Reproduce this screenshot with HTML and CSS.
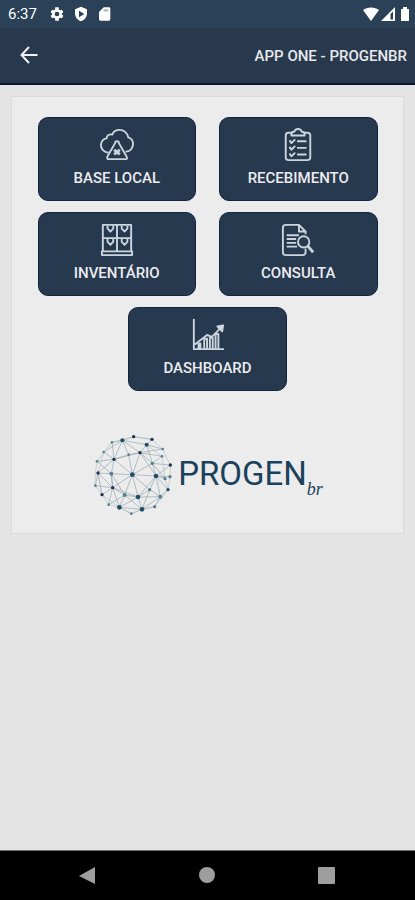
FILE: index.html
```html
<!DOCTYPE html>
<html lang="pt-BR">
<head>
<meta charset="utf-8">
<meta name="viewport" content="width=device-width, initial-scale=1">
<title>App One - ProgenBR</title>
<link rel="stylesheet" href="styles.css">
</head>
<body>
<div class="status">
  <div class="status-group">
    <span class="clock">6:37</span>
    <svg width="16" height="16" viewBox="0 0 24 24" fill="#fff" aria-hidden="true"><path fill-rule="evenodd" d="M19.4 13a7 7 0 0 0 0-2l2.2-1.700-2.200-3.800-2.600 1a8 8 0 0 0-1.800-1L14.600 2h-5.200L9 5.500a8 8 0 0 0-1.800 1l-2.600-1-2.200 3.800L4.600 11a7 7 0 0 0 0 2l-2.200 1.700 2.200 3.800 2.600-1a8 8 0 0 0 1.800 1l.4 3.500h5.200l.4-3.500a8 8 0 0 0 1.800-1l2.600 1 2.200-3.800zM12 15.500a3.500 3.500 0 1 1 0-7 3.500 3.500 0 0 1 0 7z"/></svg>
    <svg width="16" height="16" viewBox="0 0 24 24" fill="#fff" aria-hidden="true"><path fill-rule="evenodd" d="M12 1 3 5v6c0 6 4 10.500 9 12 5-1.500 9-6 9-12V5zM9 7l8 5-8 5z"/></svg>
    <svg width="16" height="16" viewBox="0 0 24 24" fill="#fff" aria-hidden="true"><path d="M18 2h-8L3 9v11c0 1 1 2 2 2h13c1 0 2-1 2-2V4c0-1-1-2-2-2z"/><path fill="#a3afba" d="M10 5h7v3h-7z"/></svg>
  </div>
  <div class="status-group status-end">
    <svg width="16" height="16" viewBox="0 0 16 16" fill="#fff" aria-hidden="true"><path d="M0 4C4 .5 12 .5 16 4L8 15z"/></svg>
    <svg width="14" height="16" viewBox="0 0 14 16" fill="#fff" aria-hidden="true"><path fill-rule="evenodd" d="M0 15 14 1v14zM9.500 8v5.500h2.500V5.500z"/></svg>
    <svg width="14" height="16" viewBox="0 0 14 16" fill="#fff" aria-hidden="true"><path d="M6 1h4v2h2v12H4V3h2z"/></svg>
  </div>
</div>
<header class="appbar">
  <button class="back" type="button" aria-label="Voltar">
    <svg width="18" height="18" viewBox="0 0 18 18" fill="none" stroke="#f2eef4" stroke-width="2" aria-hidden="true"><path d="M17.500 9H2M9 1 1.500 9 9 17"/></svg>
  </button>
  <h1 class="title">APP ONE - PROGENBR</h1>
</header>
<main class="content">
  <section class="panel">
    <nav class="menu">
      <button class="tile" type="button">
        <svg class="icon" viewBox="0 0 36 36" aria-hidden="true"><path d="M9 26H8C4 25 1 22 1 18c0-4 3-7 6-7 0-3 3-5 6-4 1-3 4-5 8-5 4 0 8 3 9 8 3 1 5 4 5 7 0 4-3 8-7 8h-1"/><path d="M18 14c-1 0-2 1-2 2L8 30c-1 2 0 3 1 3h18c2 0 2-1 1-3l-8-14c0-1-1-2-2-2z"/><path d="m15 23 6 5m0-5-6 5" stroke-width="3"/></svg>
        <span>BASE LOCAL</span>
      </button>
      <button class="tile" type="button">
        <svg class="icon" viewBox="0 0 36 36" aria-hidden="true"><path d="M12 5H8C6 5 5 6 5 8v23c0 2 1 3 3 3h20c2 0 3-1 3-3V8c0-2-1-3-3-3h-4"/><path d="M11 8V6c0-2 2-2 3-2 1-4 7-4 8 0 1 0 3 0 3 2v2zM17 14h10M17 21h10M17 28h10M9 13l2 3 4-4M9 20l2 3 4-4M9 27l2 3 4-4"/></svg>
        <span>RECEBIMENTO</span>
      </button>
      <button class="tile" type="button">
        <svg class="icon" viewBox="0 0 36 36" aria-hidden="true"><path d="M3 29V2h30v27M18 2v27M3 16h30M2 30h32v4H2z"/><path d="M8 3v3l3 3 3-3V3M23 3v3l3 3 3-3V3M8 17v3l3 3 3-3v-3M23 17v3l3 3 3-3v-3"/></svg>
        <span>INVENTÁRIO</span>
      </button>
      <button class="tile" type="button">
        <svg class="icon" viewBox="0 0 36 36" aria-hidden="true"><path d="M26 12V9l-7-7H5C3 2 2 3 2 5v26c0 2 1 3 3 3h18c2 0 3-1 3-3v-4M19 2v7h7"/><circle cx="24" cy="20" r="6"/><path d="m28 24 6 7" stroke-width="3"/><path d="M6 13h13M6 17h10M6 21h10M6 25h11"/></svg>
        <span>CONSULTA</span>
      </button>
      <button class="tile" type="button">
        <svg class="icon" viewBox="0 0 36 36" aria-hidden="true"><path d="M3 1v32h32M4 28l13-10 5 2 9-9"/><path d="M8 33v-6h2v6M14 33V22h3v11M20 33V21h3v12M26 33V17h3v16"/><path d="m28 9 5 5 1-6z" fill="#dbe2e9"/></svg>
        <span>DASHBOARD</span>
      </button>
    </nav>
    <div class="brand">
      <svg class="globe" viewBox="30 20 246 246" fill="none" aria-hidden="true">
        <path stroke="#93a5ae" stroke-width="2" d="M151 145 222 149M151 145 174 79M151 145 96 99M151 145 88 142M151 145 92 184M151 145 128 206M151 145 168 212M151 145 203 190M151 145 211 111M151 145 140 85M121 42 174 79 96 99zM174 79 194 55 121 42 155 31 210 39 194 55 242 68 174 79 211 111 194 55M174 79 222 149 211 111 265 116 222 149 249 157 211 111 240 90 174 79M222 149 168 212 203 190 222 149 235 211 203 190 180 249 168 212 112 243 128 206 168 212 92 184 128 206 80 235 92 184 112 243 180 249 148 262 112 243M96 99 88 142 92 184 48 140 96 99 65 77 121 42 90 48 96 99 45 105 88 142 48 140M92 184 60 205 48 140 40 178 92 184 88 142 128 206M168 212 235 211 180 249 218 241 235 211 258 190 222 149 264 151M128 206 180 249M96 99 140 85 121 42M140 85 174 79"/>
        <path stroke="#b4c0c5" stroke-width="2" d="M155 31 90 48 65 77 45 105 40 140 40 178 60 205 80 235 112 243 148 262 180 249 218 241 258 190 264 151 265 116 242 68 210 39zM65 77 48 140 60 205 112 243M194 55 240 90 249 157 258 190"/>
        <g fill="#1f4d69"><circle cx="151" cy="145" r="7"/><circle cx="222" cy="149" r="7"/><circle cx="168" cy="212" r="7"/><circle cx="112" cy="243" r="7"/><circle cx="180" cy="249" r="7"/><circle cx="121" cy="42" r="6"/><circle cx="194" cy="55" r="6"/><circle cx="258" cy="190" r="5"/></g>
        <g fill="#242d52"><circle cx="174" cy="79" r="5"/><circle cx="96" cy="99" r="5"/><circle cx="92" cy="184" r="5"/><circle cx="48" cy="140" r="5"/><circle cx="60" cy="205" r="5"/><circle cx="265" cy="116" r="5"/><circle cx="210" cy="39" r="5"/><circle cx="155" cy="31" r="5"/></g>
        <g fill="#55808d"><circle cx="88" cy="142" r="6"/><circle cx="128" cy="206" r="6"/><circle cx="203" cy="190" r="5"/><circle cx="211" cy="111" r="5"/><circle cx="249" cy="157" r="5"/><circle cx="264" cy="151" r="5"/><circle cx="235" cy="211" r="6"/><circle cx="242" cy="68" r="4"/><circle cx="240" cy="90" r="4"/><circle cx="90" cy="48" r="4"/><circle cx="65" cy="77" r="4"/><circle cx="45" cy="105" r="4"/><circle cx="40" cy="178" r="4"/><circle cx="80" cy="235" r="4"/><circle cx="148" cy="262" r="4"/><circle cx="218" cy="241" r="5"/><circle cx="140" cy="85" r="4"/></g>
      </svg>
      <span class="wordmark">PROGEN</span>
      <span class="suffix">br</span>
    </div>
  </section>
</main>
<footer class="sysnav">
  <button type="button" aria-label="Voltar"><svg width="18" height="18" viewBox="0 0 18 18" fill="#9e9e9e" aria-hidden="true"><path d="M16 0v17L0 9z"/></svg></button>
  <button type="button" aria-label="Início"><svg width="18" height="18" viewBox="0 0 18 18" fill="#9e9e9e" aria-hidden="true"><circle cx="9" cy="8" r="8"/></svg></button>
  <button type="button" aria-label="Recentes"><svg width="18" height="18" viewBox="0 0 18 18" fill="#9e9e9e" aria-hidden="true"><rect x="0" y="0" width="17" height="17" rx="1"/></svg></button>
</footer>
</body>
</html>
```
FILE: styles.css
```css
* {
  box-sizing: border-box;
}

body {
  margin: 0;
  min-height: 100vh;
  display: flex;
  flex-direction: column;
  background: #e4e4e4;
  font-family: Roboto, "Liberation Sans", sans-serif;
}

button {
  margin: 0;
  padding: 0;
  border: 0;
  background: none;
  font: inherit;
  color: inherit;
  cursor: pointer;
}

svg {
  display: block;
}

.status {
  display: flex;
  justify-content: space-between;
  align-items: center;
  height: 28px;
  padding: 0 4px 0 8px;
  background: #2a4157;
  color: #fff;
}

.status-group {
  display: flex;
  align-items: center;
  gap: 8px;
}

.status-end {
  gap: 2px;
}

.clock {
  margin-right: 4px;
  font-size: 15px;
  line-height: 16px;
}

.appbar {
  display: flex;
  justify-content: space-between;
  align-items: center;
  height: 57px;
  padding: 0 8px 2px 20px;
  background: #28394e;
  border-bottom: 2px solid #10123a;
}

.title {
  margin: 0;
  padding-top: 2px;
  font-size: 15px;
  line-height: 20px;
  font-weight: 500;
  color: #e9e9ec;
}

.content {
  flex: 1;
  padding: 11px;
}

.panel {
  padding: 20px 25px 18px;
  background: #ececec;
  border: 1px solid #dadada;
}

.menu {
  display: flex;
  flex-wrap: wrap;
  justify-content: center;
  gap: 11px 23px;
}

.tile {
  flex: 0 1 calc(50% - 12px);
  display: flex;
  flex-direction: column;
  align-items: center;
  gap: 7px;
  padding: 10px 0 13px;
  background: #26394f;
  border: 1px solid #14233f;
  border-radius: 10px;
  color: #ececf0;
  font-size: 15px;
  line-height: 18px;
  font-weight: 500;
}

.icon {
  width: 34px;
  height: 34px;
  fill: none;
  stroke: #cbd5de;
  stroke-width: 2;
  stroke-linejoin: round;
}

.brand {
  display: flex;
  align-items: center;
  justify-content: center;
  margin-top: 42px;
  color: #1b425c;
}

.globe {
  width: 82px;
  height: 82px;
}

.wordmark {
  margin-left: 4px;
  font-size: 33px;
  line-height: 40px;
}

.suffix {
  align-self: flex-end;
  margin-bottom: 16px;
  font-family: "Liberation Serif", serif;
  font-style: italic;
  font-size: 18px;
  line-height: 20px;
}

.sysnav {
  display: flex;
  justify-content: space-around;
  align-items: center;
  height: 50px;
  padding: 0 28px;
  background: #000;
  border-top: 1px solid #6d6d6d;
}
```
